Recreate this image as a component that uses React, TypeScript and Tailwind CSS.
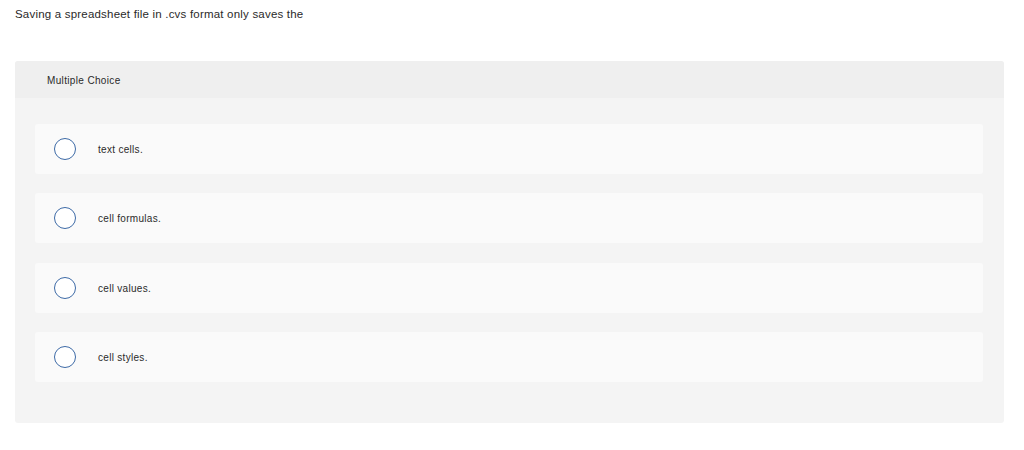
import React from 'react';

const choices = ['text cells.', 'cell formulas.', 'cell values.', 'cell styles.'];

export default function App() {
  return (
    <div className="min-h-[450px] bg-white pt-[7px] text-[#2a2a2a] [font-family:'Liberation_Sans',Arial,sans-serif]">
      <p className="pl-[15px] text-[11.5px] leading-[14px] tracking-[0.2px]">
        Saving a spreadsheet file in .cvs format only saves the
      </p>
      <div className="mx-[15px] mt-[40px] h-[362px] w-[989px] rounded-[3px] bg-[#f4f4f4]">
        <div className="flex h-[37px] items-center rounded-t-[3px] bg-[#efefef] pl-[32px] pt-[2px] text-[10px] tracking-[0.35px]">
          Multiple Choice
        </div>
        <div className="flex flex-col gap-[19.3px] pl-[20px] pr-[21px] pt-[26px]">
          {choices.map((c) => (
            <label
              key={c}
              className="flex h-[50px] items-center rounded-[3px] bg-[#fafafa] pl-[19px]"
            >
              <span className="h-[22px] w-[22px] rounded-full border border-[#3d6aa6] bg-white" />
              <span className="ml-[22px] pt-[1px] text-[10px] tracking-[0.3px]">{c}</span>
            </label>
          ))}
        </div>
      </div>
    </div>
  );
}
